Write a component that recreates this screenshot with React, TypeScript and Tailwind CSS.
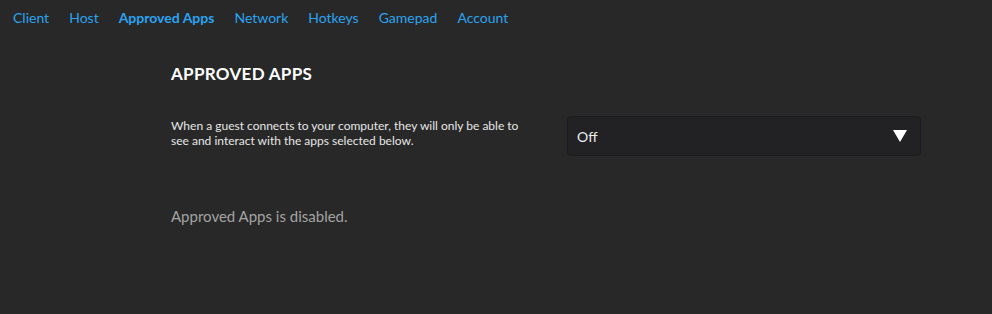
import React, { useState } from 'react';

const tabs = ['Client', 'Host', 'Approved Apps', 'Network', 'Hotkeys', 'Gamepad', 'Account'];

const App: React.FC = () => {
  const [active, setActive] = useState('Approved Apps');
  const [mode] = useState('Off');

  return (
    <div
      className="w-[992px] h-[314px] bg-[#282828] text-white overflow-hidden"
      style={{ fontFamily: 'Lato, "Open Sans", sans-serif' }}
    >
      {/* Tabs */}
      <nav className="flex items-center h-[36px] pl-[3px]">
        {tabs.map((t) => (
          <button
            key={t}
            onClick={() => setActive(t)}
            className={`px-[10px] text-[14px] leading-[20px] text-[#2ba3f1] ${
              active === t ? 'font-bold' : 'font-normal'
            }`}
          >
            {t}
          </button>
        ))}
      </nav>

      {/* Section */}
      <div className="pl-[171px] pr-[71px] pt-[28px]">
        <h2 className="text-[17px] leading-[20px] font-bold tracking-[0.3px] text-white">APPROVED APPS</h2>

        <div className="flex items-start justify-between mt-[32px]">
          <p className="w-[360px] pt-[2px] text-[12px] leading-[15px] text-[#e6e6e6]">
            When a guest connects to your computer, they will only be able to see and interact with the apps
            selected below.
          </p>
          <div className="w-[354px] h-[40px] rounded-[4px] border border-[#1b1b1c] bg-[#222224] flex items-center justify-between pl-[9px] pr-[13px]">
            <span className="text-[14px] text-[#ececec]">{mode}</span>
            <svg width="14" height="12" viewBox="0 0 14 12">
              <path d="M0 0 H14 L7 12 Z" fill="#ffffff" />
            </svg>
          </div>
        </div>

        <p className="mt-[50px] text-[15px] leading-[20px] text-[#a3a3a3]">Approved Apps is disabled.</p>
      </div>
    </div>
  );
};

export default App;
